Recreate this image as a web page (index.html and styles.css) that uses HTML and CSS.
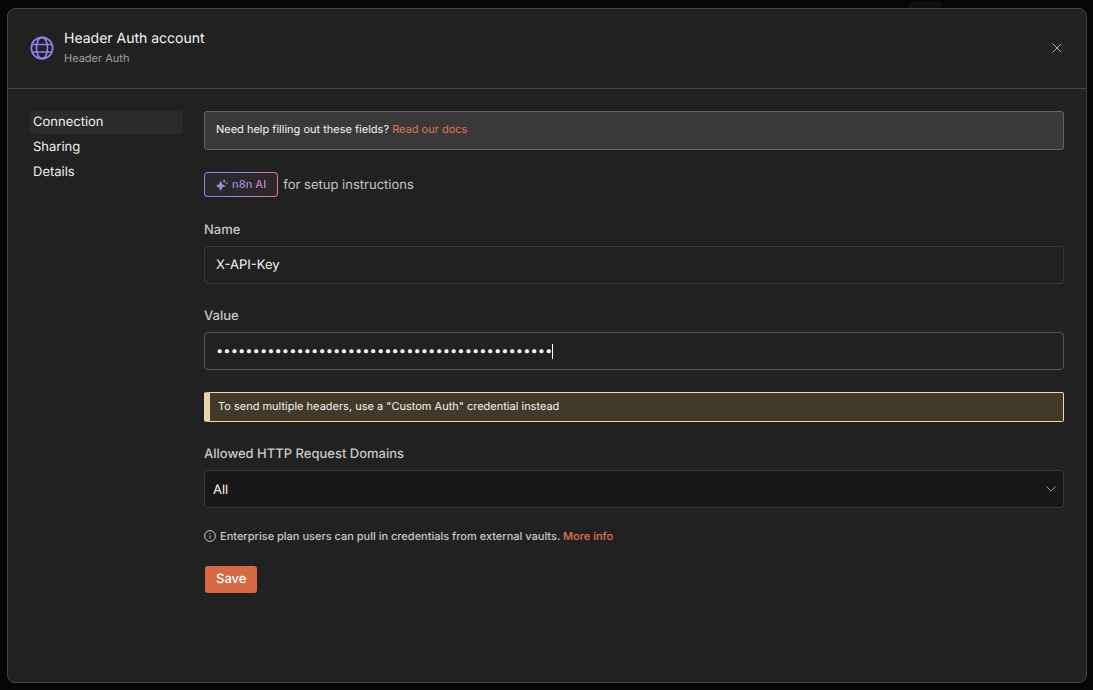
FILE: index.html
```html
<!DOCTYPE html>
<html lang="en">
<head>
    <meta charset="UTF-8">
    <meta name="viewport" content="width=device-width, initial-scale=1.0">
    <title>Header Auth account</title>
    <link rel="stylesheet" href="styles.css">
</head>
<body>
<div class="backdrop-tab"></div>
<div class="modal" role="dialog" aria-labelledby="modal-title">
    <!-- Header -->
    <header class="modal-header">
        <svg class="globe" viewBox="0 0 24 24" aria-hidden="true">
            <circle cx="12" cy="12" r="10.7"/>
            <ellipse cx="12" cy="12" rx="5.5" ry="10.7"/>
            <path d="M1.8 8.5h20.4M1.8 16h20.4"/>
        </svg>
        <div class="heading">
            <h1 id="modal-title">Header Auth account</h1>
            <p>Header Auth</p>
        </div>
        <button class="close-btn" type="button" aria-label="Close">
            <svg viewBox="0 0 10 10"><path d="M0.7 0.7l8.6 8.6M9.3 0.7l-8.6 8.6"/></svg>
        </button>
    </header>

    <div class="modal-body">
        <!-- Side menu -->
        <nav class="menu">
            <a class="active" href="#connection">Connection</a>
            <a href="#sharing">Sharing</a>
            <a href="#details">Details</a>
        </nav>

        <!-- Connection form -->
        <form class="content">
            <div class="help">Need help filling out these fields? <a href="#docs">Read our docs</a></div>

            <div class="assistant">
                <button class="ai-btn" type="button">
                    <svg viewBox="0 0 12 12" aria-hidden="true">
                        <defs>
                            <linearGradient id="spark" x1="0" y1="0" x2="1" y2="0">
                                <stop offset="0" stop-color="#9b83f5"/>
                                <stop offset="1" stop-color="#b083d6"/>
                            </linearGradient>
                        </defs>
                        <path fill="url(#spark)" d="M4.6 1.8L6.3 5.2L9.8 6.9L6.3 8.6L4.6 12L2.9 8.6L0 6.9L2.9 5.2Z"/>
                        <path fill="#ad80dc" d="M8.2 0.2L8.8 1.5L10.1 2.1L8.8 2.7L8.2 4L7.6 2.7L6.3 2.1L7.6 1.5Z"/>
                        <circle fill="#b87fc8" cx="10.8" cy="4.4" r="0.9"/>
                    </svg>
                    <span>n8n AI</span>
                </button>
                <span>for setup instructions</span>
            </div>

            <div class="form-group">
                <label for="name">Name</label>
                <input type="text" id="name" value="X-API-Key">
            </div>

            <div class="form-group">
                <label for="value">Value</label>
                <div class="focused">
                    <input type="password" id="value" autocomplete="off" value="0123456789012345678901234567890123456789012345">
                    <span class="caret"></span>
                </div>
            </div>

            <div class="notice">To send multiple headers, use a "Custom Auth" credential instead</div>

            <div class="form-group">
                <label for="domains">Allowed HTTP Request Domains</label>
                <div class="select">
                    <select id="domains">
                        <option>All</option>
                    </select>
                    <svg viewBox="0 0 10 6" aria-hidden="true"><path d="M0.5 0.5L5 5L9.5 0.5"/></svg>
                </div>
            </div>

            <p class="vaults">
                <svg viewBox="0 0 12 12" aria-hidden="true">
                    <circle cx="6" cy="6" r="5.4"/>
                    <path d="M6 5.4v3.2M6 3.2v1.1"/>
                </svg>
                <span>Enterprise plan users can pull in credentials from external vaults. <a href="#more">More info</a></span>
            </p>

            <button class="save-btn" type="submit">Save</button>
        </form>
    </div>
</div>
</body>
</html>
```

FILE: styles.css
```css
* {
    box-sizing: border-box;
}
body {
    margin: 0;
    height: 100vh;
    padding: 8px 6px 7px 7px;
    background: #050505;
    color: #f5f5f5;
    font-family: Inter, "Liberation Sans", sans-serif;
    font-size: 13px;
    line-height: 16px;
    text-rendering: geometricPrecision;
}
h1, p {
    margin: 0;
    font-weight: 400;
}
a {
    color: #e0744f;
    text-decoration: none;
}
button, input, select {
    font: inherit;
    color: inherit;
    text-rendering: inherit;
}
button {
    cursor: pointer;
}
svg {
    flex: none;
    fill: none;
}
.backdrop-tab {
    position: absolute;
    top: 1px;
    right: 151px;
    width: 33px;
    height: 16px;
    border-radius: 4px;
    background: #0e0e0e;
}
.modal {
    position: relative;
    min-height: 100%;
    border: 1px solid #464646;
    border-radius: 8px;
    background: #212121;
}

/* Header */
.modal-header {
    display: flex;
    align-items: center;
    height: 80px;
    padding: 0 22px 2px;
    border-bottom: 1px solid #464646;
}
.globe {
    width: 24px;
    height: 24px;
    stroke: #8f7fee;
    stroke-width: 1.7;
}
.heading {
    flex: 1;
    margin-left: 10px;
}
.heading h1 {
    font-size: 14px;
    line-height: 20px;
}
.heading p {
    color: #a3a3a3;
    font-size: 11px;
    line-height: 18px;
}
.close-btn {
    display: flex;
    padding: 2px;
    border: 0;
    background: none;
}
.close-btn svg {
    width: 10px;
    height: 10px;
    stroke: #adadad;
}

/* Body */
.modal-body {
    display: flex;
    gap: 21px;
    padding: 22px;
}
.menu {
    display: flex;
    flex-direction: column;
    gap: 2px;
    width: 153px;
}
.menu a {
    padding: 3px 3px 4px;
    border-radius: 3px;
    color: #f0f0f0;
}
.menu .active {
    background: #2b2b2b;
}
.content {
    flex: 1;
    min-width: 0;
}
.help {
    padding: 9px 11px 12px;
    border: 1px solid #656565;
    border-radius: 3px;
    background: #393939;
    font-size: 11px;
}
.assistant {
    display: flex;
    align-items: center;
    gap: 5px;
    margin: 22px 0 25px;
    color: #c4c4c4;
}
.ai-btn {
    display: flex;
    align-items: center;
    gap: 4px;
    height: 25px;
    padding: 0 11px;
    border: 1px solid transparent;
    border-radius: 4px;
    background: linear-gradient(#292929, #292929) padding-box,
                linear-gradient(105deg, #8480f5, #a782e8 50%, #e0748f) border-box;
    font-size: 11px;
    font-weight: 600;
}
.ai-btn svg {
    width: 12px;
    height: 12px;
}
.ai-btn span {
    padding-bottom: 2px;
    background: linear-gradient(90deg, #9c83ef, #a882dd 50%, #cf779f);
    -webkit-background-clip: text;
    background-clip: text;
    color: transparent;
}
.form-group {
    margin-bottom: 20px;
}
.form-group + .form-group {
    margin-top: 24px;
}
.form-group label {
    display: block;
    margin-bottom: 8px;
    color: #c8c8c8;
    font-weight: 500;
}
.form-group input, .form-group select {
    display: block;
    width: 100%;
    height: 38px;
    padding: 0 11px;
    border: 1px solid #393939;
    border-radius: 4px;
    outline: none;
    background: #212121;
}
.focused, .select {
    position: relative;
}
.form-group .focused input {
    border-color: #575757;
}
.caret {
    position: absolute;
    top: 12px;
    left: 348px;
    width: 1px;
    height: 15px;
    background: #ffffff;
}
.form-group select {
    appearance: none;
    padding: 2px 8px 0;
    background: #171717;
}
.select svg {
    position: absolute;
    top: 16px;
    right: 8px;
    width: 10px;
    height: 6px;
    stroke: #a0a0a0;
}
.notice {
    margin: 22px 0 24px;
    padding: 5px 8px 7px;
    border: 1px solid #ecd9a4;
    border-left: 6px solid #e8d5a8;
    border-radius: 2px;
    background: #43392b;
    font-size: 11px;
}
.vaults {
    display: flex;
    align-items: center;
    gap: 4px;
    color: #c8c8c8;
    font-size: 11px;
    font-weight: 500;
}
.vaults svg {
    width: 12px;
    height: 12px;
    stroke: #c8c8c8;
}
.save-btn {
    display: block;
    height: 27px;
    margin: 22px 1px;
    padding: 0 11px 2px;
    border: 0;
    border-radius: 3px;
    background: #d66a42;
    color: #ffffff;
    font-weight: 500;
}
```
